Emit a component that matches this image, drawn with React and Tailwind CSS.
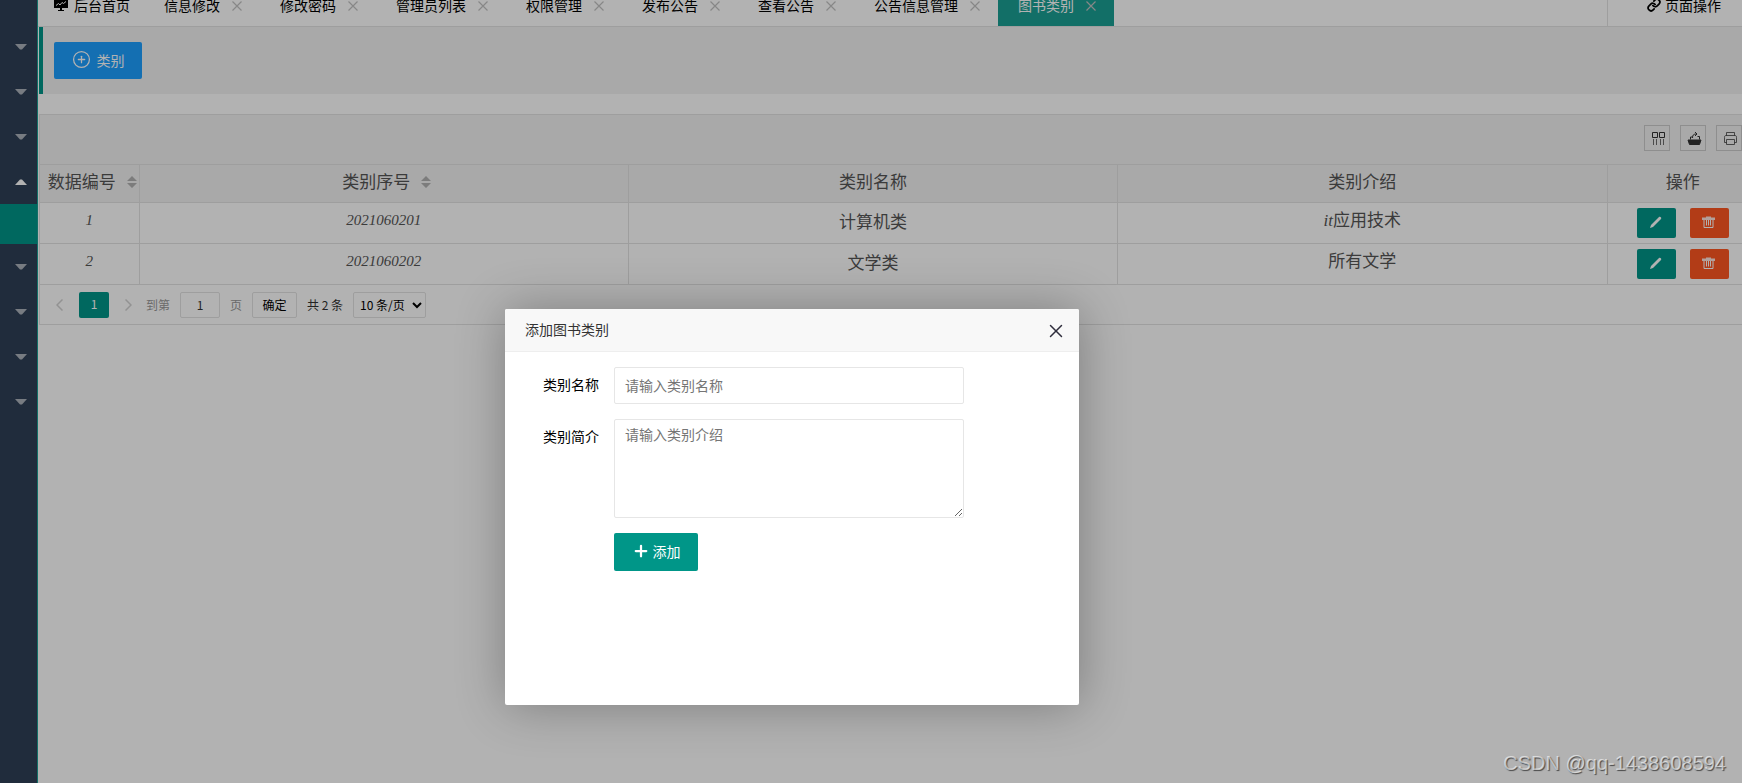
import { useState } from 'react';
import { CirclePlus, Link as LinkIcon, Plus, X } from 'lucide-react';

const TABS = ['信息修改', '修改密码', '管理员列表', '权限管理', '发布公告', '查看公告', '公告信息管理', '图书类别'];

const ROWS = [
  { id: 1, code: '2021060201', name: '计算机类', intro: <><span className="italic">it</span>应用技术</> },
  { id: 2, code: '2021060202', name: '文学类', intro: '所有文学' },
];

export default function App() {
  const [open, setOpen] = useState(true);

  return (
    <div className="relative min-h-screen overflow-hidden bg-white text-sm text-black font-['Noto_Sans_CJK_SC',sans-serif]">
      <div className="flex min-h-screen">
        <Sidebar />
        <div className="flex min-w-0 flex-1 flex-col">
          <TabBar />
          <main className="flex-1 pl-px">
            <div className="border-l-4 border-[#009688] bg-[#f2f2f2] px-[11px] py-[15px]">
              <button
                onClick={() => setOpen(true)}
                className="flex h-[37px] w-[88px] items-center justify-center gap-1.5 rounded-xs bg-[#1e9fff] pb-0.5 text-white"
              >
                <CirclePlus size={19} strokeWidth={1.6} />
                类别
              </button>
            </div>
            <CategoryTable />
          </main>
        </div>
      </div>

      {open && (
        <>
          <div className="absolute inset-0 bg-black/30" onClick={() => setOpen(false)} />
          <AddDialog onClose={() => setOpen(false)} />
        </>
      )}

      {/* WATERMARK */}
      <p className="absolute right-4 bottom-1.5 text-xl leading-7 text-white/60 font-['Liberation_Sans',sans-serif] [text-shadow:1px_1px_1px_rgb(0_0_0/0.6)]">
        CSDN @qq-1438608594
      </p>
    </div>
  );
}

function Sidebar() {
  return (
    <nav className="w-[38px] shrink-0 border-r border-[#1aa094] bg-[#2f4056] pt-6">
      <MenuItem />
      <MenuItem />
      <MenuItem />
      <MenuItem expanded />
      <a href="#category" aria-label="图书类别" className="block h-10 bg-[#009688]" />
      <MenuItem />
      <MenuItem />
      <MenuItem />
      <MenuItem />
    </nav>
  );
}

function MenuItem({ expanded }) {
  return (
    <button aria-label="菜单" aria-expanded={!!expanded} className="flex h-[45px] w-full items-center justify-end pr-2.5">
      <svg width="12" height="6" viewBox="0 0 12 6" className={expanded ? 'rotate-180 text-white' : 'text-white/60'}>
        <path d="M0 0h12L7 5.500H5z" fill="currentColor" />
      </svg>
    </button>
  );
}

function TabBar() {
  return (
    <header className="flex h-[27px] items-end overflow-hidden border-b border-[#e2e2e2]">
      <a href="#home" className="flex h-[42px] items-center gap-1.5 pr-3.5 pl-4">
        <svg width="14" height="14" viewBox="0 0 14 14">
          <path d="M0 0h14v10H0zM6 10h2v2h2v1H4v-1h2z" fill="#000" />
          <path d="M2 7.500l2.500-2L6 7l2-2.500 1.500 1L12 3.500" fill="none" stroke="#fff" />
        </svg>
        后台首页
      </a>
      {TABS.map((tab, i) => (
        <div
          key={tab}
          className={`flex h-[42px] shrink-0 items-center gap-3 pr-[18px] pl-5 ${i === TABS.length - 1 ? 'bg-[#1aa094] text-white' : ''}`}
        >
          <a href="#tab">{tab}</a>
          <button aria-label={`关闭${tab}`} className="pt-0.5 text-[#c2c2c2]">
            <svg width="10" height="10" viewBox="0 0 10 10" className="block">
              <path d="M.5.5l9 9M9.500.5l-9 9" stroke="currentColor" strokeWidth="1.200" />
            </svg>
          </button>
        </div>
      ))}
      <button className="ml-auto flex h-[42px] w-[135px] shrink-0 items-center justify-center gap-1 border-l border-[#e2e2e2] pl-[18px]">
        <LinkIcon size={14} strokeWidth={3} />
        页面操作
      </button>
    </header>
  );
}

function CategoryTable() {
  return (
    <section className="mt-5 border-y border-l border-[#e2e2e2]">
      <div className="flex h-[49px] items-center justify-end gap-2.5 bg-[#f2f2f2] pb-[3px]">
        <ToolButton label="筛选列">
          <path d="M1.500 1.500h5v5h-5zM8.500 1.500h5v5h-5z" />
          <path d="M2.500 8v6M5.500 8v6M9.500 8v6M12.500 8v6" opacity=".7" />
        </ToolButton>
        <ToolButton label="导出">
          <path d="M1 9h13l-1.500 4.500h-10z" fill="currentColor" />
          <path d="M3.500 8.500V6h2M12.500 8.500V5.500h-2M5.500 7c0-3 1-4 4-4M8 1l2 2-2 2" />
        </ToolButton>
        <ToolButton label="打印">
          <path d="M3.500 4.500v-3h8v3M3.500 11.500h-2v-5c0-1.500.5-2 1.500-2h9c1 0 1.500.5 1.500 2v5h-2M3.500 8.500h8v5h-8z" opacity=".75" />
        </ToolButton>
      </div>

      <table className="w-full table-fixed border-collapse text-center text-[#555]">
        <thead>
          <tr className="h-[38px] border-y border-[#e2e2e2] bg-[#f2f2f2] text-[17px]">
            <th className="w-[99px] border-r border-[#e2e2e2] pb-1 font-normal">
              <div className="flex items-center justify-center gap-[11px] pl-1.5">
                <span className="shrink-0">数据编号</span> <SortArrows />
              </div>
            </th>
            <th className="border-r border-[#e2e2e2] pb-1 font-normal">
              <div className="flex items-center justify-center gap-[11px] pl-1.5">
                <span className="shrink-0">类别序号</span> <SortArrows />
              </div>
            </th>
            <th className="border-r border-[#e2e2e2] pb-1 font-normal">类别名称</th>
            <th className="border-r border-[#e2e2e2] pb-1 font-normal">类别介绍</th>
            <th className="w-[135px] pb-1 pl-4 font-normal">操作</th>
          </tr>
        </thead>
        <tbody>
          {ROWS.map((row) => (
            <tr key={row.id} className="h-[41px] border-b border-[#e2e2e2] text-[17px]">
              <td className="border-r border-[#e2e2e2] pb-1 text-[15px] italic font-['Liberation_Serif',serif]">{row.id}</td>
              <td className="border-r border-[#e2e2e2] pb-1 text-[15px] italic font-['Liberation_Serif',serif]">{row.code}</td>
              <td className="border-r border-[#e2e2e2] pb-1">{row.name}</td>
              <td className="border-r border-[#e2e2e2] pb-1 font-['Liberation_Serif','Noto_Sans_CJK_SC',serif]">{row.intro}</td>
              <td>
                <div className="flex justify-end gap-3.5 pr-[13px]">
                  <button aria-label="编辑" className="flex h-[30px] w-[39px] items-center justify-center rounded-xs bg-[#009688] pr-0.5 pb-0.5 text-white">
                    <svg width="12" height="12" viewBox="0 0 12 12">
                      <path d="M0 12l1-3L9 1c1-1 3 .5 2 2L3 11z" fill="currentColor" />
                    </svg>
                  </button>
                  <button aria-label="删除" className="flex h-[30px] w-[39px] items-center justify-center rounded-xs bg-[#ff5722] pr-0.5 pb-0.5 text-white">
                    <svg width="13" height="12" viewBox="0 0 13 12">
                      <path d="M0 1.500h4V.5h5v1h4V4H0z" fill="currentColor" opacity=".85" />
                      <path d="M2 4v7.500h9V4M4.500 4v5.500M6.500 4v5.500M8.500 4v5.500" fill="none" stroke="currentColor" />
                    </svg>
                  </button>
                </div>
              </td>
            </tr>
          ))}
        </tbody>
      </table>

      <Pagination />
    </section>
  );
}

function ToolButton({ label, children }) {
  return (
    <button aria-label={label} className="flex size-[26px] items-center justify-center border border-[#ccc] pl-0.5 text-[#333]">
      <svg width="15" height="15" viewBox="0 0 15 15" fill="none" stroke="currentColor" className="shrink-0">
        {children}
      </svg>
    </button>
  );
}

function SortArrows() {
  return (
    <svg width="10" height="12" viewBox="0 0 10 12" className="shrink-0 text-[#b2b2b2]">
      <path d="M5 0l5 5H0zM0 7h10l-5 5z" fill="currentColor" />
    </svg>
  );
}

function Pagination() {
  return (
    <div className="flex h-[39px] items-center gap-2.5 pl-4 text-xs text-[#333]">
      <button aria-label="上一页" className="text-[#d2d2d2]">
        <svg width="7" height="12" viewBox="0 0 7 12" className="block">
          <path d="M6.500.5L1 6l5.500 5.500" fill="none" stroke="currentColor" strokeWidth="1.500" />
        </svg>
      </button>
      <span className="mx-1.5 flex h-[26px] w-[30px] items-center justify-center rounded-xs bg-[#009688] pb-0.5 text-white">1</span>
      <button aria-label="下一页" className="text-[#d2d2d2]">
        <svg width="7" height="12" viewBox="0 0 7 12" className="block">
          <path d="M.5.5L6 6 .5 11.500" fill="none" stroke="currentColor" strokeWidth="1.500" />
        </svg>
      </button>
      <label className="ml-1 flex items-center gap-2.5 text-[#999]">
        到第
        <input defaultValue="1" className="h-[26px] w-10 rounded-xs border border-[#e2e2e2] text-center text-[#333]" />
        页
      </label>
      <button className="h-[26px] w-[45px] rounded-xs border border-[#e2e2e2] text-black">确定</button>
      <span>共 2 条</span>
      <select aria-label="每页条数" className="h-[26px] w-[73px] rounded-xs border border-[#e2e2e2] pl-0.5 text-black">
        <option>10 条/页</option>
        <option>20 条/页</option>
      </select>
    </div>
  );
}

function AddDialog({ onClose }) {
  return (
    <div
      role="dialog"
      aria-labelledby="dialog-title"
      className="absolute top-[309px] left-[505px] min-h-[396px] w-[574px] rounded-xs bg-white shadow-[1px_1px_50px_rgba(0,0,0,0.3)]"
    >
      <div className="flex h-[43px] items-center justify-between rounded-t-xs border-b border-[#eee] bg-[#f8f8f8] pr-3 pl-5">
        <h2 id="dialog-title" className="pb-[3px] text-[#333]">添加图书类别</h2>
        <button aria-label="关闭" onClick={onClose} className="pt-0.5 text-[#2e2d3c]">
          <X size={22} strokeWidth={1.6} />
        </button>
      </div>
      <form className="flex flex-col gap-[15px] pt-[15px] pr-[115px]" onSubmit={(e) => e.preventDefault()}>
        <div className="flex">
          <label htmlFor="name" className="w-[109px] shrink-0 pt-[7px] pr-[15px] text-right">类别名称</label>
          <input id="name" placeholder="请输入类别名称" className="h-[37px] min-w-0 flex-1 rounded-xs border border-[#e6e6e6] px-2.5 pb-0.5 placeholder:text-[#757575]" />
        </div>
        <div className="flex">
          <label htmlFor="intro" className="w-[109px] shrink-0 pt-[7px] pr-[15px] text-right">类别简介</label>
          <textarea id="intro" placeholder="请输入类别介绍" className="h-[99px] min-w-0 flex-1 rounded-xs border border-[#e6e6e6] px-2.5 py-1 placeholder:text-[#757575]" />
        </div>
        <button className="ml-[109px] flex h-[38px] w-[84px] items-center justify-center gap-[3px] rounded-xs bg-[#009688] pb-0.5 text-white">
          <Plus size={18} strokeWidth={3} />
          添加
        </button>
      </form>
    </div>
  );
}
